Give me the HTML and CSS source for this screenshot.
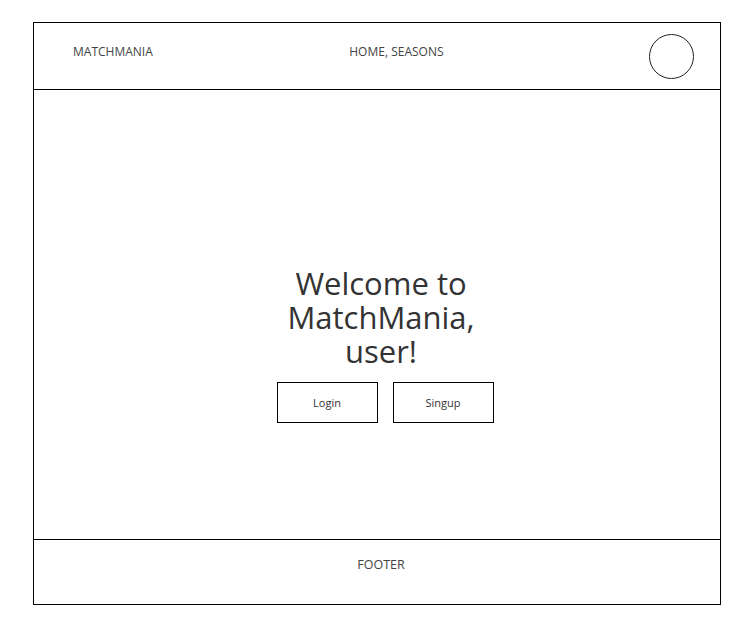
FILE: index.html
```html
<!DOCTYPE html>
<html>
<head>
<meta charset="utf-8">
<link rel="stylesheet" href="styles.css">
</head>
<body>
<div class="frame">
  <header class="header">
    <div class="brand">MATCHMANIA</div>
    <nav class="nav">HOME, SEASONS</nav>
    <div class="avatar"></div>
  </header>
  <main class="main">
    <h1 class="title">Welcome to MatchMania, user!</h1>
    <div class="actions">
      <button class="btn">Login</button>
      <button class="btn">Singup</button>
    </div>
  </main>
  <footer class="footer">FOOTER</footer>
</div>
</body>
</html>
```
FILE: styles.css
```css
html, body {
  margin: 0;
  padding: 0;
  background: #fff;
}
body {
  font-family: "Open Sans", "Noto Sans", sans-serif;
  color: #3d3d3d;
}
.frame {
  margin: 22px 0 0 33px;
  width: 686px;
  border: 1px solid #000;
}
.header {
  height: 66px;
  border-bottom: 1px solid #000;
  display: flex;
  align-items: center;
  justify-content: space-between;
  padding: 0 26px 0 39px;
  font-size: 12px;
}
.brand, .nav {
  color: #444;
  margin-bottom: 9px;
}
.nav {
  margin-right: 9px;
}
.avatar {
  width: 43px;
  height: 43px;
  border: 1px solid #222;
  border-radius: 50%;
}
.main {
  height: 450px;
  border-bottom: 1px solid #000;
  display: flex;
  flex-direction: column;
  align-items: center;
  box-sizing: border-box;
  padding-top: 176px;
  padding-left: 8px;
}
.title {
  margin: 0;
  width: 200px;
  text-align: center;
  font-weight: 400;
  font-size: 31px;
  line-height: 34px;
  color: #333;
}
.actions {
  display: flex;
  gap: 15px;
  margin-top: 14px;
  padding-left: 8px;
}
.btn {
  width: 101px;
  height: 41px;
  background: #fff;
  border: 1px solid #000;
  border-radius: 0;
  font-family: "Open Sans", "Noto Sans", sans-serif;
  font-size: 11px;
  color: #333;
  padding: 0;
}
.footer {
  height: 64px;
  display: flex;
  align-items: center;
  justify-content: center;
  box-sizing: border-box;
  padding: 0 0 15px 8px;
  font-size: 12.5px;
  color: #444;
}
```
